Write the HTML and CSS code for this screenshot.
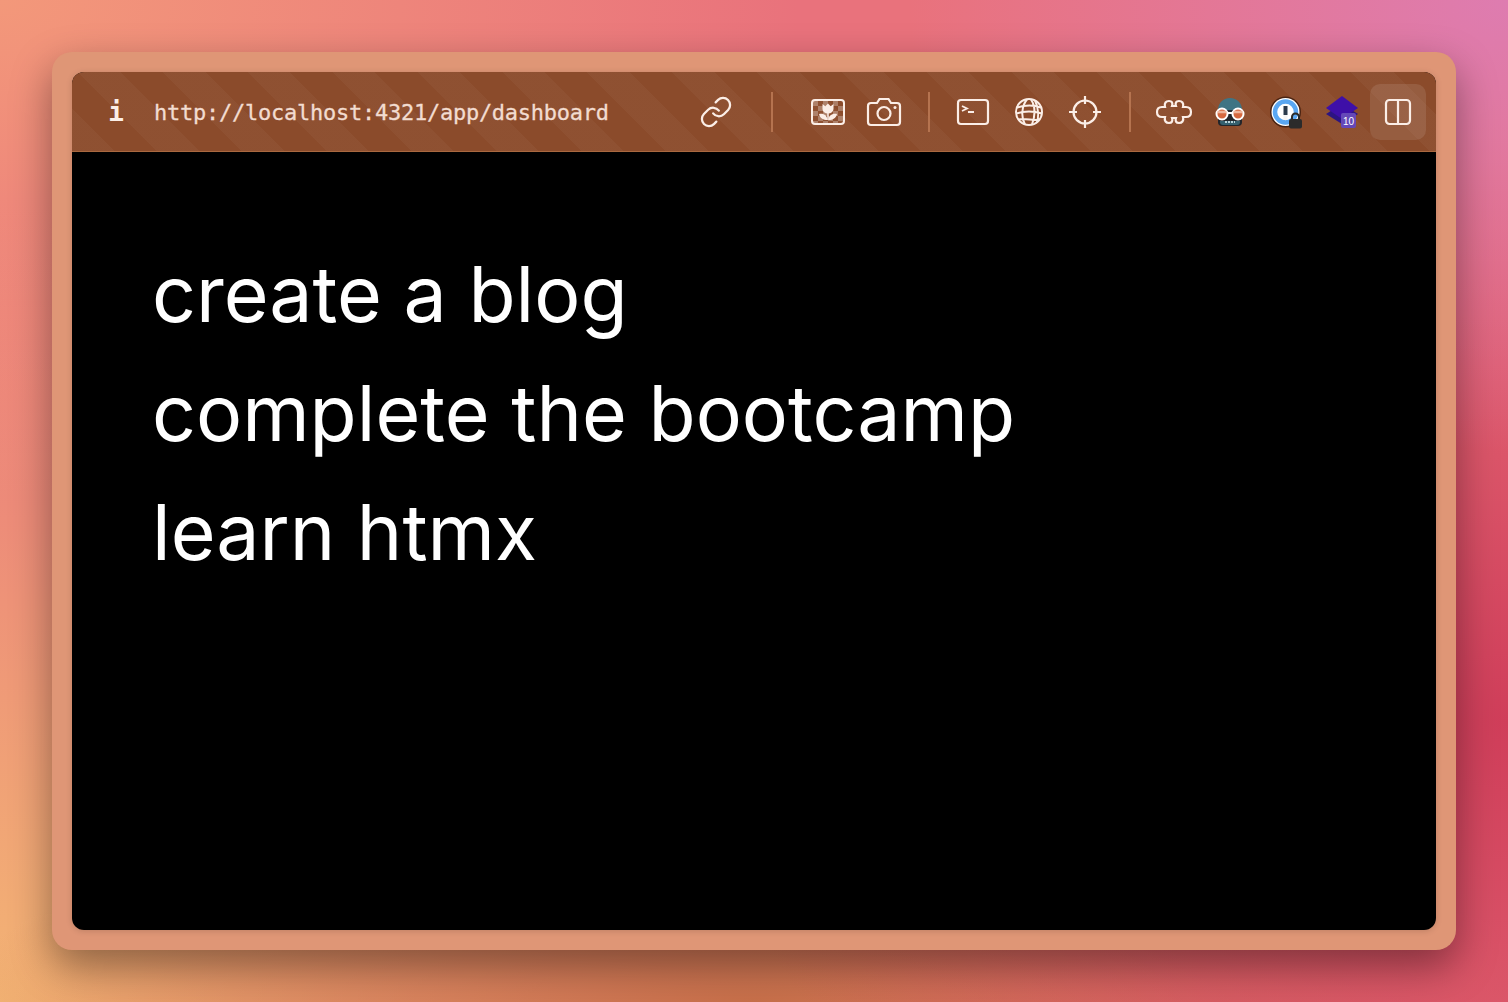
FILE: index.html
```html
<!DOCTYPE html>
<html lang="en">
<head>
    <meta charset="UTF-8">
    <meta name="viewport" content="width=device-width, initial-scale=1.0">
    <title>Dashboard</title>
    <link rel="stylesheet" href="styles.css">
</head>
<body>
<div class="frame">
    <div class="window">
        <header class="toolbar">
            <span class="info">i</span>
            <span class="url">http://localhost:4321/app/dashboard</span>

            <button class="tool">
                <svg width="34" height="34" viewBox="0 0 24 24" fill="none" stroke="currentColor" stroke-width="1.6" stroke-linecap="round"><path d="M10 13a5 5 0 0 0 7.54.54l3-3a5 5 0 0 0-7.07-7.07l-1.72 1.71"/><path d="M14 11a5 5 0 0 0-7.54-.54l-3 3a5 5 0 0 0 7.07 7.07l1.71-1.71"/></svg>
            </button>
            <i class="sep sep-wide"></i>

            <button class="tool">
                <svg width="36" height="28" viewBox="0 0 36 28">
                    <defs><pattern id="checks" width="10" height="10" x="3" y="3" patternUnits="userSpaceOnUse"><rect width="5" height="5" fill="#fff" opacity=".28"/><rect x="5" y="5" width="5" height="5" fill="#fff" opacity=".28"/></pattern></defs>
                    <rect x="2" y="2" width="32" height="24" rx="3" fill="url(#checks)" stroke="currentColor" stroke-width="2"/>
                    <path d="M12.5 6l2.800 2.200L18 5.500l2.700 2.700L23.500 6v5a5.500 4.500 0 0 1-11 0z" fill="currentColor"/>
                    <path d="M18 15v7" stroke="currentColor" stroke-width="1.500"/>
                    <path d="M17.500 22c-4.500 0-7.500-2-8.500-6 4.500-1 8 1 8.500 6zM18.500 22c4.500 0 7.500-2 8.500-6-4.500-1-8 1-8.500 6z" fill="currentColor"/>
                </svg>
            </button>
            <button class="tool">
                <svg width="36" height="30" viewBox="0 0 36 30" fill="none" stroke="currentColor" stroke-width="2.2"><path d="M5 6h6l2.500-4h9L25 6h6a3 3 0 0 1 3 3v16a3 3 0 0 1-3 3H5a3 3 0 0 1-3-3V9a3 3 0 0 1 3-3z"/><circle cx="18" cy="16.500" r="6.500"/><circle cx="29" cy="10.500" r="1.500" fill="currentColor" stroke="none"/></svg>
            </button>
            <i class="sep"></i>

            <button class="tool">
                <svg width="34" height="28" viewBox="0 0 34 28" fill="none" stroke="currentColor" stroke-width="2.2"><rect x="2" y="2" width="30" height="24" rx="3"/><path d="M6 8l5 2.500L6 13M12 14h6" stroke-width="1.800"/></svg>
            </button>
            <button class="tool">
                <svg width="30" height="30" viewBox="0 0 30 30" fill="none" stroke="currentColor" stroke-width="2"><circle cx="15" cy="15" r="13"/><path d="M13 2.500C8 8 6.500 20 11 27.500M17 2.500c4 6 5 14 1 25M21 3.500c3 6 4 15 2 22M3 10.500c8-2.500 17-2.500 24 0M2 16.500c8-2.500 18-2.500 26 0M4.500 22.500c7-2 15 2 21 0"/></svg>
            </button>
            <button class="tool">
                <svg width="34" height="34" viewBox="0 0 34 34" fill="none" stroke="currentColor" stroke-width="2.2"><circle cx="17" cy="17" r="11.500"/><path d="M17 1v8M17 25v8M1 17h8M25 17h8"/></svg>
            </button>
            <i class="sep"></i>

            <button class="tool">
                <svg width="38" height="26" viewBox="0 0 38 26" fill="none" stroke="currentColor" stroke-width="2.2"><path d="M10 8C9 4 11 2 14 2c3 0 4 2 3 5h4c-1-3 0-5 3-5 3 0 5 2 4 6h3c3 0 5 2 5 5s-2 5-5 5h-3c1 4-1 6-4 6-3 0-4-2-3-5h-4c1 3 0 5-3 5-3 0-5-2-4-6H7c-3 0-5-2-5-5s2-5 5-5z"/></svg>
            </button>
            <button class="tool">
                <svg width="30" height="30" viewBox="0 0 30 30">
                    <path d="M3 13C3 6 8 1 15 1s12 5 12 12z" fill="#3f7484"/>
                    <path d="M3 13h24v12a4 4 0 0 1-4 4H7a4 4 0 0 1-4-4z" fill="#23262b"/>
                    <path d="M5 24h20v1a3 3 0 0 1-3 3H8a3 3 0 0 1-3-3z" fill="#35606e"/>
                    <path d="M10 25h10" stroke="#b9d3da" stroke-width="2" stroke-dasharray="2 1"/>
                    <circle cx="7" cy="17" r="5.500" fill="#d5683f" stroke="#fff" stroke-width="2"/>
                    <circle cx="23" cy="17" r="5.500" fill="#d5683f" stroke="#fff" stroke-width="2"/>
                    <path d="M2.500 15h9M18.500 15h9" stroke="#eeb59c" stroke-width="2.500"/>
                    <path d="M12 16h6" stroke="#fff" stroke-width="2"/>
                </svg>
            </button>
            <button class="tool">
                <svg width="34" height="34" viewBox="0 0 34 34">
                    <circle cx="16.500" cy="17" r="15.500" fill="#4a2413"/>
                    <circle cx="16.500" cy="17" r="14" fill="#fff"/>
                    <circle cx="16.500" cy="17" r="10.500" fill="none" stroke="#5aa7f2" stroke-width="4.500"/>
                    <rect x="14.500" y="11" width="4" height="9" fill="#2a3a4c"/>
                    <rect x="14.500" y="20" width="4" height="5" fill="#f4f4f4"/>
                    <path d="M23 25v-3a3.500 3.500 0 0 1 7 0v3" fill="none" stroke="#2b2b2b" stroke-width="2"/>
                    <rect x="20" y="24" width="13" height="9.500" rx="2" fill="#2b2b2b"/>
                </svg>
            </button>
            <button class="tool">
                <svg width="34" height="34" viewBox="0 0 34 34">
                    <path d="M1 19l16 10 16-10-16-10z" fill="#2c1482"/>
                    <path d="M1 13L17 1l16 12-16 11z" fill="#3e0fa8"/>
                    <rect x="16" y="18" width="15" height="15" rx="2" fill="#6548b8"/>
                    <text x="23.500" y="29.500" class="badge">10</text>
                </svg>
            </button>
            <button class="tool tool-active">
                <svg width="28" height="28" viewBox="0 0 28 28" fill="none" stroke="currentColor" stroke-width="2.2"><rect x="2" y="2" width="24" height="24" rx="3.500"/><path d="M14 2v24"/></svg>
            </button>
        </header>

        <main class="todos">
            <p>create a blog</p>
            <p>complete the bootcamp</p>
            <p>learn htmx</p>
        </main>
    </div>
</div>
</body>
</html>
```

FILE: styles.css
```css
html, body {
    height: 100%;
}

body {
    margin: 0;
    padding: 52px;
    box-sizing: border-box;
    overflow: hidden;
    background:
        radial-gradient(600px 450px at 100% 0, #de7cb0 0%, #de7cb000 100%),
        radial-gradient(800px 600px at 100% 72%, #d03e5a 0%, #d03e5a00 100%),
        radial-gradient(800px 200px at 50% 100%, #c8704a 0%, #c8704a00 100%),
        radial-gradient(1200px 800px at 0 100%, #f3b474 0%, #f3b47400 100%),
        radial-gradient(800px 500px at 0 0, #f3987a 0%, #f3987a00 100%),
        #e9727c;
}

.frame {
    height: 100%;
    padding: 20px;
    box-sizing: border-box;
    background-color: #df9676;
    border-radius: 20px;
    box-shadow: 0 16px 40px #00000066;
}

.window {
    height: 100%;
    display: flex;
    flex-direction: column;
    background-color: #000;
    border-radius: 12px;
    overflow: hidden;
    box-shadow: 0 1px 6px #00000026;
}

.toolbar {
    flex: none;
    height: 80px;
    display: flex;
    align-items: center;
    padding: 1px 10px 0 6px;
    box-sizing: border-box;
    color: #fbeee7;
    border-bottom: 1px solid #a9683f;
    background-color: #8b4b2b;
    background-image: repeating-linear-gradient(45deg, #ffffff08 0 30px, #ffffff00 30px 60px);
}

.info {
    width: 76px;
    text-align: center;
    font: bold 26px "DejaVu Sans Mono", monospace;
}

.url {
    flex: 1;
    font: 22px "DejaVu Sans Mono", monospace;
    letter-spacing: -0.25px;
    color: #f2dcd0;
    -webkit-text-stroke: 0.3px #f2dcd0;
    white-space: nowrap;
}

.tool {
    flex: none;
    width: 56px;
    height: 56px;
    display: flex;
    align-items: center;
    justify-content: center;
    padding: 0;
    border: 0;
    border-radius: 10px;
    background: none;
    color: inherit;
}

.tool-active {
    background-color: #ffffff1a;
}

.sep {
    flex: none;
    width: 2px;
    height: 40px;
    margin: 0 15.5px;
    background-color: #b5734f;
}

.sep-wide {
    margin: 0 27px;
}

.badge {
    font: 10px "Liberation Sans", sans-serif;
    fill: #fff;
    text-anchor: middle;
}

.todos {
    flex: 1;
    padding: 83px 80px;
    color: #fff;
    font: 77px/119px Inter, sans-serif;
}

.todos p {
    margin: 0;
}
```
